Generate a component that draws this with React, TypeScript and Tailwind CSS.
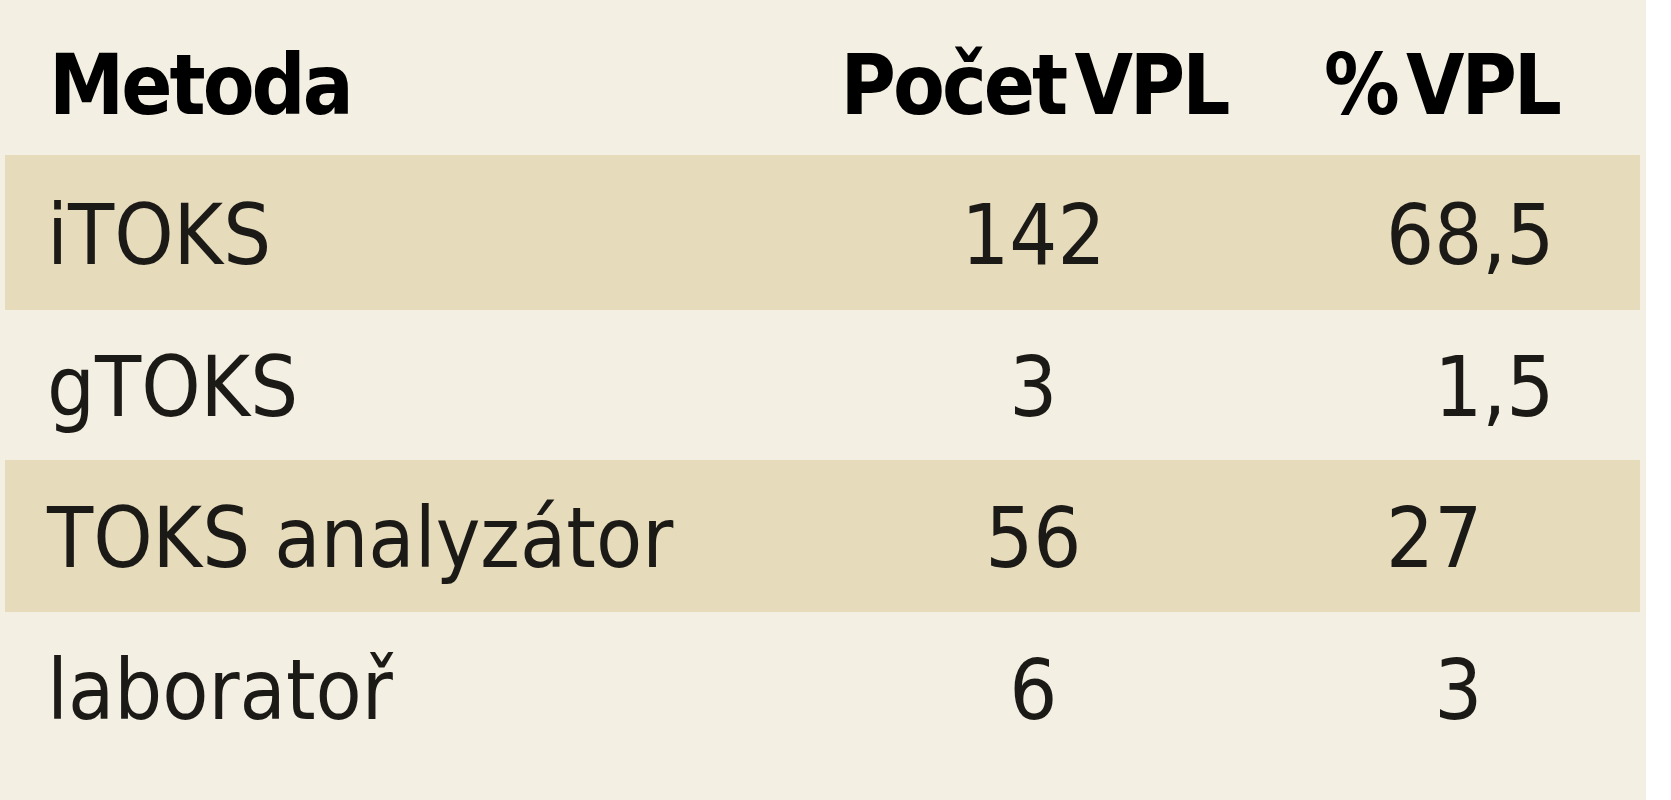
const rows = [
  { name: 'iTOKS', count: '142', int: '68', frac: ',5', band: true, h: 'h-[155px]' },
  { name: 'gTOKS', count: '3', int: '1', frac: ',5', band: false, h: 'h-[150px]' },
  { name: 'TOKS analyzátor', count: '56', int: '27', frac: '', band: true, h: 'h-[152px]' },
  { name: 'laboratoř', count: '6', int: '3', frac: '', band: false, h: 'h-[152px]' },
];

const font = "font-['DejaVu_Sans_Condensed','DejaVu_Sans',sans-serif] font-stretch-condensed";

const App = () => {
  return (
    <div className="w-[1671px] h-[800px] bg-white">
      <div className={`w-[1646px] h-[800px] bg-[#f3efe2] ${font} text-[84px] leading-none`}>
        {/* header */}
        <div className="flex items-center h-[155px] pt-[14px] px-[5px] font-bold text-black tracking-[-3px] [word-spacing:-14px] whitespace-nowrap">
          <div className="w-[831px] pl-[44px]">Metoda</div>
          <div className="w-[396px] text-center">Počet VPL</div>
          <div className="w-[409px] text-center pl-[10px]">% VPL</div>
        </div>

        {rows.map((r) => (
          <div key={r.name} className={`flex items-center ${r.h} ml-[5px] mr-[6px] text-[#1c1a17] whitespace-nowrap ${r.band ? 'bg-[#e6dbbb]' : ''}`}>
            <div className="w-[831px] pl-[42px] pt-[4px]">{r.name}</div>
            <div className="w-[396px] text-center pt-[4px]">{r.count}</div>
            <div className="w-[409px] flex pt-[4px]">
              <span className="w-[251px] text-right">{r.int}</span>
              <span>{r.frac}</span>
            </div>
          </div>
        ))}
      </div>
    </div>
  );
};

export default App;
